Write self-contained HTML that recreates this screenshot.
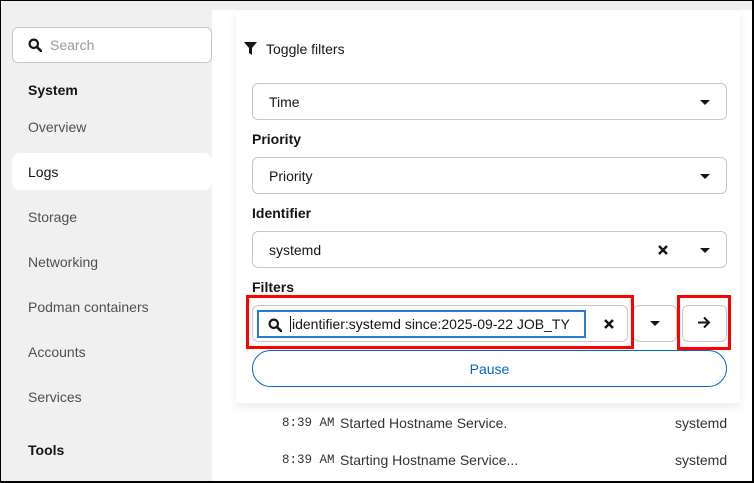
<!DOCTYPE html>
<html><head><style>
*{box-sizing:border-box;margin:0;padding:0}
body{width:754px;height:483px;overflow:hidden;font-family:"Liberation Sans",sans-serif;font-size:14px;color:#151515;background:#f0f0f0;position:relative}
.frame{position:absolute;left:0;top:0;width:754px;height:483px;border:1px solid #000;border-right-width:2px;border-bottom-width:2px;pointer-events:none;z-index:10}
.a{position:absolute}
.side{left:1px;top:1px;width:211px;height:481px;background:#f0f0f0}
.main{left:212px;top:10px;width:540px;height:472px;background:#fff}
.card{left:236px;top:10px;width:504px;height:393px;background:#fff;box-shadow:0 4px 8px rgba(0,0,0,.08)}
.nav{position:absolute;left:28px;color:#4f4f4f}
.sel{position:absolute;left:252px;width:475px;height:37px;border:1px solid #c7c7c7;border-radius:6px;background:#fff}
.sel span{position:absolute;left:16px;top:10px}
.caret{position:absolute;width:0;height:0;border-left:5px solid transparent;border-right:5px solid transparent;border-top:5px solid #151515}
.lbl{position:absolute;left:252px;font-weight:bold}
.mono{font-family:"Liberation Mono",monospace;font-size:12.5px;color:#333}
</style></head><body>
<div class="a side"></div>
<div class="a main"></div>
<div class="a card"></div>

<div class="a" style="left:12px;top:27px;width:200px;height:36px;border:1px solid #c7c7c7;border-radius:6px;background:#fff"></div>
<svg class="a" style="left:28px;top:38px" width="14" height="14" viewBox="0 0 14 14"><circle cx="5.8" cy="5.8" r="4.2" fill="none" stroke="#151515" stroke-width="2.2"/><path d="M8.8 8.8L13 13" stroke="#151515" stroke-width="2.6" stroke-linecap="round"/></svg>
<div class="a" style="left:50px;top:37px;color:#999">Search</div>
<div class="a" style="left:28px;top:82px;font-weight:bold">System</div>
<div class="nav" style="top:119px">Overview</div>
<div class="a" style="left:12px;top:153px;width:200px;height:37px;background:#fff;border-radius:8px"></div>
<div class="a" style="left:28px;top:164px">Logs</div>
<div class="nav" style="top:209px">Storage</div>
<div class="nav" style="top:254px">Networking</div>
<div class="nav" style="top:299px">Podman containers</div>
<div class="nav" style="top:344px">Accounts</div>
<div class="nav" style="top:389px">Services</div>
<div class="a" style="left:28px;top:442px;font-weight:bold">Tools</div>

<svg class="a" style="left:244px;top:42px" width="13" height="13" viewBox="0 0 13 13"><path d="M0 0H13L8 6V13L5 11V6Z" fill="#151515"/></svg>
<div class="a" style="left:266px;top:41px">Toggle filters</div>

<div class="sel" style="top:83px"><span>Time</span><div class="caret" style="left:447px;top:16px"></div></div>
<div class="lbl" style="top:131px">Priority</div>
<div class="sel" style="top:157px"><span>Priority</span><div class="caret" style="left:447px;top:16px"></div></div>
<div class="lbl" style="top:205px">Identifier</div>
<div class="sel" style="top:231px"><span>systemd</span>
<svg class="a" style="left:405px;top:13px" width="10" height="10" viewBox="0 0 10 10"><path d="M1 1L9 9M9 1L1 9" stroke="#151515" stroke-width="2.4"/></svg>
<div class="caret" style="left:447px;top:16px"></div></div>
<div class="lbl" style="top:279px">Filters</div>

<div class="a" style="left:252px;top:305px;width:376px;height:37px;border:1px solid #c7c7c7;border-radius:6px;background:#fff"></div>
<div class="a" style="left:257px;top:310px;width:329px;height:28px;border:2px solid #2b7bd6"></div>
<svg class="a" style="left:268px;top:318px" width="14" height="14" viewBox="0 0 14 14"><circle cx="5.8" cy="5.8" r="4.2" fill="none" stroke="#151515" stroke-width="2.2"/><path d="M8.8 8.8L13 13" stroke="#151515" stroke-width="2.6" stroke-linecap="round"/></svg>
<div class="a" style="left:290px;top:316px;width:1px;height:16px;background:#151515"></div>
<div class="a" style="left:292px;top:316px;white-space:nowrap;font-size:14px">identifier:systemd since:2025-09-22 JOB_TY</div>
<svg class="a" style="left:604px;top:319px" width="10" height="10" viewBox="0 0 10 10"><path d="M1 1L9 9M9 1L1 9" stroke="#151515" stroke-width="2.4"/></svg>
<div class="a" style="left:633px;top:305px;width:44px;height:37px;border:1px solid #c7c7c7;border-radius:6px;background:#fff"></div>
<div class="caret" style="left:650px;top:321px"></div>
<div class="a" style="left:682px;top:305px;width:45px;height:37px;border:1px solid #c7c7c7;border-radius:6px;background:#fff"></div>
<svg class="a" style="left:697px;top:316px" width="14" height="13" viewBox="0 0 14 13"><path d="M1 6.5H12M7 1.5L12 6.5L7 11.5" fill="none" stroke="#151515" stroke-width="2"/></svg>
<div style="position:absolute;border:3px solid #f00;left:246px;top:295px;width:388px;height:54px"></div>
<div style="position:absolute;border:3px solid #f00;left:677px;top:295px;width:54px;height:55px"></div>

<div class="a" style="left:252px;top:350px;width:475px;height:37px;border:1px solid #0066cc;border-radius:19px;color:#0066cc;text-align:center;line-height:36px">Pause</div>

<div class="a mono" style="left:282px;top:416px">8:39 AM</div>
<div class="a" style="left:340px;top:415px;color:#333">Started Hostname Service.</div>
<div class="a" style="left:675px;top:415px;color:#333">systemd</div>
<div class="a mono" style="left:282px;top:453px">8:39 AM</div>
<div class="a" style="left:340px;top:452px;color:#333">Starting Hostname Service...</div>
<div class="a" style="left:675px;top:452px;color:#333">systemd</div>
<div class="frame"></div>
</body></html>
